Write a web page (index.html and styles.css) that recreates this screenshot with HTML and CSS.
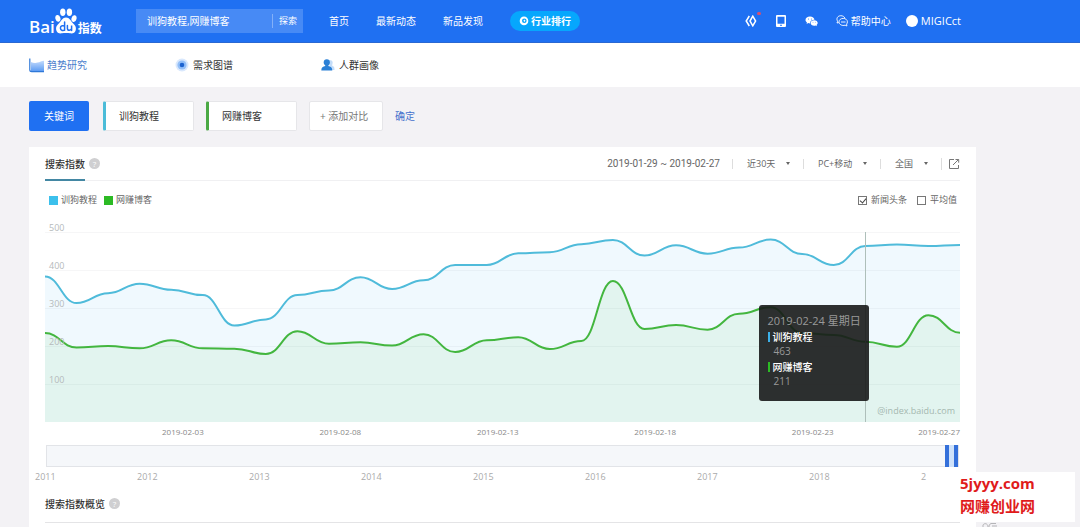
FILE: index.html
```html
<!DOCTYPE html>
<html lang="zh-CN">
<head>
<meta charset="utf-8">
<title>百度指数</title>
<link rel="stylesheet" href="styles.css">
</head>
<body>
<header class="topbar">
  <a class="logo" href="#" aria-label="百度指数">
    <span class="logo-bai">Bai</span>
    <svg class="logo-paw" viewBox="0 0 22 26" width="22" height="26" aria-hidden="true">
      <g fill="#fff">
        <ellipse cx="7.800" cy="4.200" rx="2.700" ry="3.700"/>
        <ellipse cx="14.400" cy="4.200" rx="2.700" ry="3.700"/>
        <ellipse cx="2.900" cy="10.400" rx="2.500" ry="3.400" transform="rotate(-15 2.900 10.400)"/>
        <ellipse cx="19" cy="10.600" rx="2.500" ry="3.400" transform="rotate(15 19 10.600)"/>
        <path d="M11 9.600c3.600 0 4.600 3.400 6.700 5.300 2.600 2.300 3.700 4.100 3.100 7-.6 2.800-3 3.800-5.600 3.400-2.600-.4-5.800-.4-8.400 0-2.600.4-5-.6-5.600-3.400-.6-2.900.5-4.700 3.100-7C6.400 13 7.400 9.600 11 9.600z"/>
      </g>
      <g fill="none" stroke="#1f70f2" stroke-width="1.500" stroke-linecap="round">
        <path d="M9.600 14v8.200M9.600 18.300c-1-1-4.200-1-4.200 1.800s3.200 3 4.200 1.700"/>
        <path d="M12.400 17.600v2.800c0 2.400 4 2.400 4.200 0v-2.800 4.800"/>
      </g>
    </svg>
    <span class="logo-index">指数</span>
  </a>
  <form class="search">
    <input class="search-input" type="text" value="训狗教程,网赚博客" aria-label="关键词搜索">
    <button class="search-button" type="button">探索</button>
  </form>
  <nav class="main-nav">
    <a href="#">首页</a>
    <a href="#">最新动态</a>
    <a href="#">新品发现</a>
    <a class="rank-pill" href="#">
      <svg viewBox="0 0 10 10" width="10" height="10" aria-hidden="true">
        <path fill="#fff" fill-rule="evenodd" d="M5 .6a4.300 4.300 0 1 1 0 8.600A4.300 4.300 0 0 1 5 .6zM5.300 2.400a2.200 2.200 0 1 0 0 4.600 2.200 2.200 0 0 0 0-4.600z"/>
        <path fill="#fff" d="M5.400 3.400l1.100 1.300-1.100 1.300-1-1.300z"/>
      </svg>
      <span>行业排行</span>
    </a>
  </nav>
  <div class="tools">
    <a class="tool tool-dot" href="#" aria-label="代码">
      <svg viewBox="0 0 12 12" width="12" height="12" aria-hidden="true">
        <g fill="none" stroke="#fff" stroke-width="1.500"><path d="M4.300 1L1.200 6l3.100 5"/><path d="M7.800 1.200L5 6l2.800 4.800L10.600 6z"/></g>
      </svg>
    </a>
    <a class="tool" href="#" aria-label="移动版">
      <svg viewBox="0 0 12 12" width="12" height="12" aria-hidden="true">
        <path fill="#fff" fill-rule="evenodd" d="M2 0h8a1 1 0 0 1 1 1v10a1 1 0 0 1-1 1H2a1 1 0 0 1-1-1V1a1 1 0 0 1 1-1zm.5 1.700v7h7v-7zM5 9.700v1h2v-1z"/>
      </svg>
    </a>
    <a class="tool" href="#" aria-label="微信">
      <svg viewBox="0 0 13 12" width="13" height="12" aria-hidden="true">
        <path fill="#fff" d="M5 1.500c2.500 0 4.300 1.500 4.500 3.200-2.700-.1-4.600 1.500-4.500 3.700-.7 0-1.200-.1-1.700-.3L1.600 9l.4-1.500C1 6.800.5 5.900.5 5 .5 3 2.500 1.500 5 1.500z"/>
        <path fill="#fff" d="M9.200 5.300c2 0 3.500 1.200 3.500 2.700 0 .8-.4 1.500-1.100 2l.3 1.200-1.300-.7c-.4.1-.9.200-1.400.2-2 0-3.600-1.200-3.600-2.700s1.600-2.700 3.600-2.700z"/>
        <g fill="#1f70f2"><circle cx="3.500" cy="4" r=".5"/><circle cx="6.400" cy="4" r=".5"/><circle cx="8" cy="7.200" r=".4"/><circle cx="10.300" cy="7.200" r=".4"/></g>
      </svg>
    </a>
    <a class="tool" href="#">
      <svg viewBox="0 0 12 12" width="12" height="12" aria-hidden="true">
        <g fill="none" stroke="#fff" stroke-width=".9"><path d="M2.800 7.600L1 8l.6-1.700C-.2 3.200 2 .7 4.800.7c2 0 3.400.9 4 2.300"/><path d="M7.200 3.400c2.500 0 4.200 1.500 4.200 3.500 0 .9-.3 1.600-.8 2.200l.3 1.900-1.800-.8c-3 .9-6.100-.7-6.100-3.300 0-2 1.800-3.500 4.200-3.500z"/><path d="M5 7h4.500"/></g>
      </svg>
      <span>帮助中心</span>
    </a>
    <a class="tool user" href="#"><i class="avatar"></i><span>MIGICct</span></a>
  </div>
</header>

<nav class="subnav">
  <a class="subnav-item active" href="#">
    <svg viewBox="0 0 16 15" width="16" height="15" aria-hidden="true">
      <defs><linearGradient id="area" x1="0" y1="0" x2="0" y2="1"><stop offset="0" stop-color="#c4dbfd"/><stop offset="1" stop-color="#5f9df3"/></linearGradient></defs>
      <path fill="url(#area)" d="M2 4c2 .8 4 1.200 6.500.6C10.800 4 12.500 3 15 2.700V13H2z"/>
      <path fill="none" stroke="#2f78d8" stroke-width="1.200" d="M.8.500v11.300c0 1.300.6 1.900 1.900 1.900H15"/>
    </svg>
    <span>趋势研究</span>
  </a>
  <a class="subnav-item" href="#">
    <svg viewBox="0 0 14 14" width="14" height="14" aria-hidden="true">
      <circle cx="7" cy="7" r="6.500" fill="#d9e8fd"/><circle cx="7" cy="7" r="4.600" fill="#93bff8"/><circle cx="7" cy="7" r="2.300" fill="#1d63d0"/>
    </svg>
    <span>需求图谱</span>
  </a>
  <a class="subnav-item" href="#">
    <svg viewBox="0 0 14 12" width="14" height="12" aria-hidden="true">
      <path fill="#c3ddfa" d="M8 1.500c3-.8 4.500 1.500 3.300 4-.4 1 .2 1.600 1.200 2 .7.300 1 1 1 3.500H9z"/>
      <circle cx="5.800" cy="3.400" r="3.100" fill="#2b80d6"/><path fill="#2b80d6" d="M.3 11.500C.3 8.500 2 7.600 4.300 7V5h3v2c2.300.6 4 1.500 4 4.500z"/>
    </svg>
    <span>人群画像</span>
  </a>
</nav>

<main class="content">
  <div class="keywords">
    <button class="chip chip-primary" type="button">关键词</button>
    <button class="chip chip-word chip-blue" type="button">训狗教程</button>
    <button class="chip chip-word chip-green" type="button">网赚博客</button>
    <button class="chip chip-add" type="button">+ 添加对比</button>
    <a class="confirm" href="#">确定</a>
  </div>

  <section class="panel">
    <div class="panel-head">
      <h2 class="tab-title">搜索指数</h2>
      <button class="help" type="button" aria-label="说明">?</button>
      <div class="filters">
        <span class="date-range">2019-01-29 ~ 2019-02-27</span>
        <span class="filter"><select aria-label="时间范围"><option>近30天</option></select></span>
        <span class="filter"><select aria-label="设备"><option>PC+移动</option></select></span>
        <span class="filter"><select aria-label="地区"><option>全国</option></select></span>
        <button class="export" type="button" aria-label="导出">
          <svg viewBox="0 0 12 12" width="12" height="12" aria-hidden="true">
            <g fill="none" stroke="#777" stroke-width="1"><path d="M6 1.500H1.500v9h9V7"/><path d="M5 7l5.500-5.500M7.500 1.500h3.200v3.200"/></g>
          </svg>
        </button>
      </div>
    </div>

    <div class="legend">
      <span class="legend-item"><i class="swatch swatch-blue"></i>训狗教程</span>
      <span class="legend-item"><i class="swatch swatch-green"></i>网赚博客</span>
      <div class="toggles">
        <label class="toggle"><input type="checkbox" checked>新闻头条</label>
        <label class="toggle"><input type="checkbox">平均值</label>
      </div>
    </div>

    <div class="chart">
      <svg class="plot" viewBox="0 0 915 190" preserveAspectRatio="none" role="img" aria-label="搜索指数趋势">
        <path class="grid" d="M0 .5H915M0 38.500H915M0 76.500H915M0 114.500H915M0 152.500H915"/>
        <path id="blue-area" class="area-blue"/>
        <path id="green-area" class="area-green"/>
        <path id="blue-line" class="line line-blue"/>
        <path id="green-line" class="line line-green"/>
        <path class="cursor" d="M820.500 0V190"/>
      </svg>
      <div class="y-axis"><span>500</span><span>400</span><span>300</span><span>200</span><span>100</span></div>
      <span class="credit">@index.baidu.com</span>
      <div class="tooltip">
        <div class="tip-date">2019-02-24 星期日</div>
        <div class="tip-name tip-blue">训狗教程</div>
        <div class="tip-value">463</div>
        <div class="tip-name tip-green">网赚博客</div>
        <div class="tip-value">211</div>
      </div>
    </div>
    <div class="x-axis"><span>2019-02-03</span><span>2019-02-08</span><span>2019-02-13</span><span>2019-02-18</span><span>2019-02-23</span><span>2019-02-27</span></div>

    <div class="range"><i class="range-window"></i></div>
    <div class="years"><span>2011</span><span>2012</span><span>2013</span><span>2014</span><span>2015</span><span>2016</span><span>2017</span><span>2018</span><span>2</span></div>

    <div class="overview-head">
      <h2>搜索指数概览</h2>
      <button class="help" type="button" aria-label="说明">?</button>
    </div>
  </section>
</main>

<svg class="corner-mark" viewBox="0 0 16 5" width="16" height="5" aria-hidden="true">
  <g fill="none" stroke="#b5b5b8" stroke-width="1"><path d="M1 5V3c1-2 5-2 5 2M14 1.500H9C7.500 2 7 3.500 7 5M10 4h5"/></g>
</svg>
<aside class="site-badge"><span>5jyyy.com</span><span>网赚创业网</span></aside>
<script src="chart.js"></script>
</body>
</html>
```
FILE: styles.css
```css
* { box-sizing: border-box; }
body {
  margin: 0;
  min-height: 100vh;
  display: flex;
  flex-direction: column;
  overflow: hidden;
  position: relative;
  background: #f3f2f5;
  color: #333;
  font: 10px/14px "Open Sans", "Noto Sans CJK SC", sans-serif;
}
a { color: inherit; text-decoration: none; }
button, input, select { font: inherit; color: inherit; margin: 0; padding: 0; border: 0; background: none; }
svg { display: block; flex: none; }
h2 { margin: 0; font-size: 10px; font-weight: 500; }

.topbar {
  display: flex;
  align-items: center;
  height: 43px;
  padding: 0 119px 0 29px;
  background: #1f70f2;
  border-bottom: 1px solid #2a68d2;
  color: #fff;
}
.logo { display: flex; align-items: flex-end; width: 74px; height: 26px; margin-right: 33px; white-space: nowrap; }
.logo-bai { font: 600 17px/20px "Open Sans", sans-serif; height: 17px; }
.logo-index { font: 700 12px/14px "Noto Sans CJK SC", sans-serif; height: 13px; margin-left: 1px; }
.search { display: flex; align-items: center; width: 167px; height: 24px; background: #478af5; }
.search-input { flex: 1; min-width: 0; height: 14px; padding-left: 11px; border-right: 1px solid #83b0f8; outline: 0; }
.search-button { width: 30px; font-size: 9px; }
.main-nav { display: flex; align-items: center; gap: 27px; margin-left: 26px; white-space: nowrap; }
.rank-pill {
  display: flex;
  align-items: center;
  gap: 2px;
  height: 20px;
  padding: 0 9px;
  border-radius: 10px;
  background: #06a7fd;
  font-weight: 700;
}
.tools { display: flex; align-items: center; gap: 18px; margin-left: auto; white-space: nowrap; }
.tool { display: flex; align-items: center; gap: 3px; position: relative; }
.tool-dot::after { content: ""; position: absolute; top: -3px; right: -4px; width: 4px; height: 3px; border-radius: 2px; background: #d8506f; }
.avatar { width: 12px; height: 12px; border-radius: 50%; background: #fff; }
.user { font-size: 11px; margin-left: -3px; }

.subnav { display: grid; grid-template-columns: repeat(3, 146px); align-items: center; height: 44px; padding-left: 29px; background: #fff; }
.subnav-item { display: flex; align-items: center; gap: 4px; }
.active { color: #4a7dcc; gap: 2px; }

.content { flex: 1; display: flex; flex-direction: column; padding: 14px 104px 0 29px; }
.keywords { display: flex; align-items: center; gap: 12px; height: 30px; }
.chip { height: 30px; border-radius: 2px; text-align: left; white-space: nowrap; }
.chip-primary { width: 60px; margin-right: 2px; text-align: center; color: #fff; background: #1f70f2; }
.chip-word { width: 91px; padding-left: 13px; background: #fff; border: 1px solid #e6e6e9; border-left: 3px solid #4bbcd8; }
.chip-green { border-left-color: #4aa944; }
.chip-add { width: 74px; padding-left: 10px; background: #fff; border: 1px solid #e6e6e9; color: #777; }
.confirm { color: #4470cc; }

.panel { flex: 1; margin-top: 16px; padding: 0 16px; background: #fff; }
.panel-head { display: flex; align-items: center; height: 34px; border-bottom: 1px solid #f0f0f2; }
.tab-title { height: 34px; line-height: 34px; border-bottom: 2px solid #4387a3; }
.help { width: 11px; height: 11px; margin-left: 4px; border-radius: 50%; background: #cfcfd1; color: #fff; font-size: 8px; line-height: 11px; }
.filters { display: flex; align-items: center; margin-left: auto; font-size: 9px; color: #666; white-space: nowrap; }
.date-range { padding-right: 12px; font-size: 10px; font-family: Roboto, sans-serif; }
.filter { display: flex; align-items: center; height: 10px; padding: 0 13px 0 14px; border-left: 1px solid #ddd; }
.filter select { appearance: none; height: 14px; }
.filter::after { content: ""; margin-left: 10px; border: 2px solid transparent; border-top: 3px solid #666; border-bottom: 0; }
.export { padding-left: 6px; border-left: 1px solid #ddd; }

.legend { display: flex; align-items: center; gap: 7px; height: 38px; padding: 0 3px 0 4px; font-size: 9px; color: #666; }
.legend-item { display: flex; align-items: center; gap: 3px; }
.swatch { width: 9px; height: 9px; }
.swatch-blue { background: #3cc0ec; }
.swatch-green { background: #2cba24; }
.toggles { display: flex; gap: 10px; margin-left: auto; }
.toggle { display: flex; align-items: center; gap: 4px; }
.toggle input { appearance: none; position: relative; width: 9px; height: 9px; border: 1px solid #777; }
.toggle input:checked::after { content: ""; position: absolute; left: 2px; top: 0; width: 3px; height: 5px; border: solid #444; border-width: 0 1px 1px 0; transform: rotate(40deg); }

.chart { position: relative; margin-top: 13px; }
.plot { width: 100%; height: 190px; overflow: visible; }
.plot path { vector-effect: non-scaling-stroke; }
.grid { stroke: #f6f6f7; fill: none; }
.area-blue { fill: rgba(60, 180, 240, .08); }
.area-green { fill: rgba(60, 190, 60, .08); }
.line { fill: none; stroke-width: 2; }
.line-blue { stroke: #4fbbda; }
.line-green { stroke: #43b63f; }
.cursor { stroke: #aebfba; fill: none; }
.y-axis { position: absolute; left: 4px; top: -11px; font-size: 9px; color: #b5babb; }
.y-axis span { display: block; height: 38px; }
.credit { position: absolute; right: 5px; bottom: 4px; font-size: 9px; color: #a5b8b0; }
.tooltip {
  position: absolute;
  right: 10%;
  top: 73px;
  width: 110px;
  height: 96px;
  padding: 9px;
  border-radius: 3px;
  background: rgba(24, 26, 26, .9);
  color: #999;
}
.tip-date { font-size: 11px; white-space: nowrap; }
.tip-name { padding-left: 3px; border-left: 2px solid; line-height: 10px; margin: 4px 0 2px; color: #fff; font-weight: 500; }
.tip-blue { border-left-color: #3cb0e8; }
.tip-green { border-left-color: #2cba24; }
.tip-value { padding-left: 6px; }

.x-axis { display: flex; padding-left: 117px; margin-top: 3px; font-size: 8px; color: #888; white-space: nowrap; }
.x-axis span { flex: 1 1 157px; min-width: 0; }
.x-axis span:nth-last-child(2) { flex-basis: 126px; }
.x-axis span:last-child { flex: none; }

.range { height: 22px; margin: 6px 1px 0; border: 1px solid #e2e4e8; background: #f5f7fa; display: flex; }
.range-window { width: 13px; margin: -1px 0 -1px auto; border: solid #3470da; border-width: 0 4px; background: #cfe2fa; }
.years { display: flex; margin: 3px 0 0 -10px; font-size: 9px; color: #aaa; }
.years span { flex: 112 1 0; min-width: 0; }
.years span:first-child { flex-grow: 102; }
.years span:last-child { flex-grow: 39; }
.overview-head { display: flex; align-items: center; height: 38px; margin-top: 1px; border-bottom: 1px solid #e4e4e6; }

.corner-mark { position: absolute; right: 82px; bottom: 0; }
.site-badge {
  position: absolute;
  right: 5px;
  bottom: 5px;
  width: 115px;
  height: 50px;
  display: flex;
  flex-direction: column;
  background: #fff;
  color: #e01b1b;
  font-size: 15px;
  font-weight: 700;
  line-height: 23px;
}
```
FILE: chart.js
```js
const HEIGHT = 190;
const WIDTH = 915;
const MAX = 500;
const SMOOTH = 0.45;

const series = {
  blue: [383, 313, 339, 364, 348, 334, 254, 270, 334, 346, 381, 350, 373, 413, 413, 444, 447, 468, 479, 438, 465, 443, 459, 480, 442, 413, 463, 467, 463, 466],
  green: [234, 196, 200, 194, 215, 194, 193, 179, 239, 206, 210, 201, 231, 184, 215, 223, 192, 213, 371, 245, 255, 243, 285, 302, 234, 229, 211, 198, 281, 235]
};

function curve(values) {
  const step = WIDTH / (values.length - 1);
  const y = v => HEIGHT - v / MAX * HEIGHT;
  let d = `M0 ${y(values[0])}`;
  for (let i = 1; i < values.length; i++) {
    const left = step * (i - 1 + SMOOTH);
    const right = step * (i - SMOOTH);
    d += `C${left} ${y(values[i - 1])} ${right} ${y(values[i])} ${step * i} ${y(values[i])}`;
  }
  return d;
}

for (const [name, values] of Object.entries(series)) {
  const d = curve(values);
  document.getElementById(`${name}-line`).setAttribute("d", d);
  document.getElementById(`${name}-area`).setAttribute("d", `${d}V${HEIGHT}H0Z`);
}
```
